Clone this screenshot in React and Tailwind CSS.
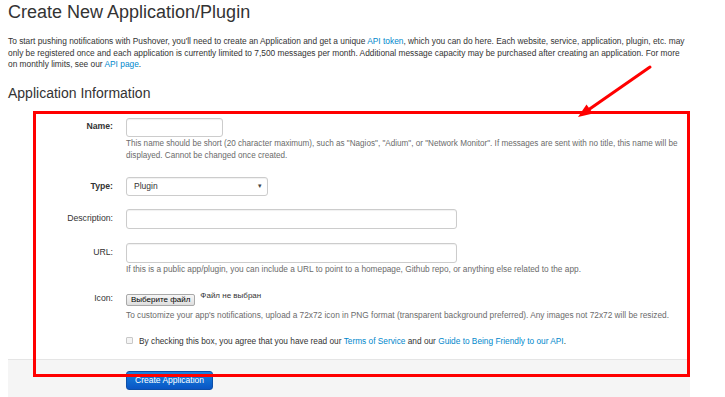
export default function App() {
  const help = "text-[8.3px] leading-[12px] text-[#6b6b6b] whitespace-nowrap";
  const label = "w-[105px] shrink-0 text-right text-[8.7px] text-[#333]";
  const input = "border border-[#cccccc] rounded-[3px] bg-white shadow-[inset_0_1px_1px_rgba(0,0,0,0.06)]";
  const link = "text-[#0088cc]";

  return (
    <div className="relative w-[725px] h-[397px] overflow-hidden bg-white font-['Liberation_Sans',Arial,sans-serif] text-[#333]">
      <div className="ml-[8px] w-[682px]">
        <h1 className="mt-[1px] text-[18px] leading-[22px] font-normal text-[#333]">Create New Application/Plugin</h1>

        <p className="mt-[13px] text-[8.35px] leading-[11.5px] text-[#333] whitespace-nowrap">
          To start pushing notifications with Pushover, you'll need to create an Application and get a unique <span className={link}>API token</span>, which you can do here. Each website, service, application, plugin, etc. may
          <br />
          only be registered once and each application is currently limited to 7,500 messages per month. Additional message capacity may be purchased after creating an application. For more
          <br />
          on monthly limits, see our <span className={link}>API page</span>.
        </p>

        <h2 className="mt-[14px] text-[14px] leading-[17px] font-normal text-[#333]">Application Information</h2>

        <div className="mt-[16px] flex flex-col">
          {/* Name */}
          <div className="flex gap-[13px]">
            <label className={`${label} font-bold leading-[17px]`}>Name:</label>
            <div className="flex flex-col">
              <div className={`${input} w-[97px] h-[19px]`} />
              <div className="mt-[1px] text-[8.15px] leading-[12px] text-[#6b6b6b] whitespace-nowrap">
                This name should be short (20 character maximum), such as "Nagios", "Adium", or "Network Monitor". If messages are sent with no title, this name will be
                <br />
                displayed. Cannot be changed once created.
              </div>
            </div>
          </div>

          {/* Type */}
          <div className="mt-[15px] flex gap-[13px]">
            <label className={`${label} font-bold leading-[19px]`}>Type:</label>
            <div className={`${input} w-[142px] h-[19px] flex items-center justify-between pl-[7px] pr-[5px]`}>
              <span className="text-[8.5px] text-[#333]">Plugin</span>
              <span className="text-[7px] text-[#444]">▾</span>
            </div>
          </div>

          {/* Description */}
          <div className="mt-[13px] flex gap-[13px]">
            <label className={`${label} leading-[19px]`}>Description:</label>
            <div className={`${input} w-[331px] h-[20px]`} />
          </div>

          {/* URL */}
          <div className="mt-[14px] flex gap-[13px]">
            <label className={`${label} leading-[19px]`}>URL:</label>
            <div className="flex flex-col">
              <div className={`${input} w-[331px] h-[20px]`} />
              <div className={help}>
                If this is a public app/plugin, you can include a URL to point to a homepage, Github repo, or anything else related to the app.
              </div>
            </div>
          </div>

          {/* Icon */}
          <div className="mt-[19px] flex gap-[13px]">
            <label className={`${label} leading-[9px]`}>Icon:</label>
            <div className="flex flex-col">
              <div className="flex items-start gap-[5px]">
                <div className="h-[12px] px-[4px] border border-[#a9a9a9] rounded-[2px] bg-gradient-to-b from-[#f6f6f6] to-[#dedede] text-[8px] leading-[10px] text-black whitespace-nowrap">
                  Выберите файл
                </div>
                <span className="-mt-[3px] text-[8px] leading-[10px] text-[#333]">Файл не выбран</span>
              </div>
              <div className={`${help} mt-[3px]`}>
                To customize your app's notifications, upload a 72x72 icon in PNG format (transparent background preferred). Any images not 72x72 will be resized.
              </div>
            </div>
          </div>

          {/* Terms */}
          <div className="mt-[14px] flex items-center gap-[6px] pl-[118px]">
            <div className="w-[7px] h-[7px] border border-[#c8c8c8] rounded-[1px] bg-[#f4f4f4]" />
            <span className="text-[8.3px] leading-[12px] text-[#333] whitespace-nowrap">
              By checking this box, you agree that you have read our <span className={link}>Terms of Service</span> and our <span className={link}>Guide to Being Friendly to our API</span>.
            </span>
          </div>
        </div>

        <div className="mt-[12px] h-[60px] flex items-start border-t border-[#e5e5e5] bg-[#f5f5f5] pt-[11px] pl-[118px]">
          <button className="w-[87px] h-[19px] rounded-[3px] border border-[#0d4fa8] bg-gradient-to-b from-[#1a82e0] to-[#0a55c4] text-white text-[8.5px] leading-[17px]">
            Create Application
          </button>
        </div>
      </div>

      {/* annotation overlay */}
      <div className="absolute left-[33px] top-[111px] w-[657px] h-[266px] border-[3px] border-[#ff0000] pointer-events-none" />
      <svg className="absolute left-0 top-0 pointer-events-none" width="725" height="397" viewBox="0 0 725 397">
        <line x1="650" y1="67" x2="586" y2="111.5" stroke="#ff0000" strokeWidth="3" strokeLinecap="round" />
        <polygon points="578,117 593,113.5 586.5,104.5" fill="#ff0000" />
      </svg>
    </div>
  );
}
